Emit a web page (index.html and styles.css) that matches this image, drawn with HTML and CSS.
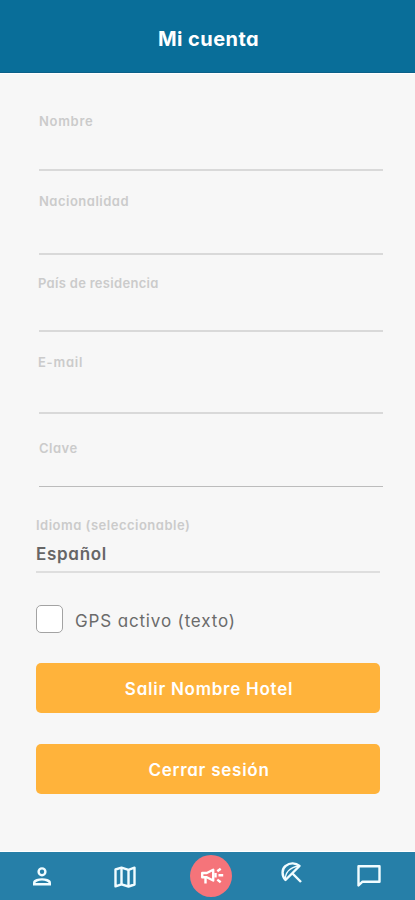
FILE: index.html
```
<!DOCTYPE html>
<html lang="es">
<head>
  <meta charset="UTF-8">
  <meta name="viewport" content="width=device-width, initial-scale=1">
  <title>Mi cuenta</title>
  <link rel="stylesheet" href="styles.css">
</head>

<body>
  <header class="topbar">
    <h1>Mi cuenta</h1>
  </header>

  <main class="account">
    <div class="fields">
      <div class="field nombre"><label>Nombre</label></div>
      <div class="field nacionalidad"><label>Nacionalidad</label></div>
      <div class="field pais"><label>País de residencia</label></div>
      <div class="field email"><label>E-mail</label></div>
      <div class="field clave"><label>Clave</label></div>
    </div>

    <div class="field idioma">
      <label>Idioma (seleccionable)</label>
      <span class="value">Español</span>
    </div>

    <div class="gps">
      <span class="checkbox"></span>
      <span class="gps-text">GPS activo (texto)</span>
    </div>

    <button type="button" class="btn salir">Salir Nombre Hotel</button>
    <button type="button" class="btn cerrar">Cerrar sesión</button>
  </main>

  <nav class="tabbar">
    <a class="tab user">
      <svg width="18" height="19" viewBox="0 0 18 19" fill="none" stroke="currentColor" stroke-width="2.4">
        <circle cx="9" cy="4.8" r="3.4"/>
        <path d="M1.2 17.3v-1.4c0-2.400 4.600-3.500 7.800-3.500s7.800 1.100 7.800 3.500v1.400z"/>
      </svg>
    </a>
    <a class="tab map">
      <svg width="22" height="22" viewBox="0 0 22 22" fill="none" stroke="currentColor" stroke-width="2.4" stroke-linejoin="round">
        <path d="M1.5 3.5L7.5 1.6l7 2.2 6-2.1v16.8l-6 2-7-2.2-6 2z"/>
        <path d="M7.5 1.6v16.7M14.5 3.8v16.7"/>
      </svg>
    </a>
    <a class="tab promo">
      <svg width="24" height="18" viewBox="0 0 24 18" fill="none" stroke="currentColor" stroke-width="2.400">
        <path d="M2.200 6h4.600l6.400-3.300v10.800L6.800 10.300H2.200z" stroke-linejoin="round"/>
        <path d="M5.500 10.500v6M15.500 6v4.400"/>
        <path d="M17.300 4.200l3.400-2.500M18.500 8.300h4.700M17.300 12.600l3.400 2.700"/>
      </svg>
    </a>
    <a class="tab beach">
      <svg width="22" height="22" viewBox="0 0 22 22" fill="none" stroke="currentColor" stroke-width="2.400" stroke-linejoin="round">
        <path d="M4.500 18C.5 13.500.6 7 4.800 3.800 9 .3 14.700.8 18.500 4z"/>
        <path d="M4.500 18C3.800 11.500 8 5 18.500 4" stroke-width="1.300"/>
        <path d="M11 11l9 9"/>
      </svg>
    </a>
    <a class="tab chat">
      <svg width="24" height="24" viewBox="0 0 24 24" fill="none" stroke="currentColor" stroke-width="2.400" stroke-linejoin="round">
        <path d="M1.500 2.200h21v15.500H5.500l-4 3.800z"/>
      </svg>
    </a>
  </nav>
</body>
</html>
```

FILE: styles.css
```
* {
  box-sizing: border-box;
}

body {
  margin: 0;
  height: 900px;
  display: flex;
  flex-direction: column;
  background: #f7f7f7;
  font-family: Inter, "Open Sans", sans-serif;
  font-feature-settings: "cv11";
  overflow: hidden;
}

.topbar {
  height: 73px;
  padding: 24px 0 0 2px;
  background: #096e99;
  border-bottom: 1px solid #0b6089;
  box-shadow: 0 1px 0 #fff;
  text-align: center;
}

h1 {
  margin: 0;
  color: #fff;
  font-size: 20px;
  line-height: 30px;
  font-weight: 700;
  letter-spacing: 0.45px;
}

.account {
  flex: 1;
  padding: 39px 35px 0 36px;
}

.fields {
  width: 344px;
  margin-left: 3px;
}

.field {
  border-bottom: 2px solid #d9d9d9;
}

.field label {
  display: block;
  color: #cbcbcb;
  font-size: 13px;
  line-height: 18px;
  font-weight: 600;
  letter-spacing: 0.5px;
}

.nombre {
  height: 59px;
}

.nombre label {
  letter-spacing: 0.7px;
}

.nacionalidad {
  height: 63px;
  margin-top: 21px;
}

.pais {
  height: 58px;
  margin-top: 19px;
}

.pais label {
  margin-left: -1px;
  letter-spacing: 0.3px;
}

.email {
  height: 61px;
  margin-top: 21px;
}

.email label {
  margin-left: -1px;
  letter-spacing: 0.75px;
}

.clave {
  height: 48px;
  margin-top: 25px;
  border-bottom: 1px solid #bcbcbc;
}

.idioma {
  height: 57px;
  margin-top: 29px;
  border-bottom-color: #dedede;
}

.value {
  display: block;
  margin-top: 7px;
  color: #666;
  font-size: 17px;
  line-height: 26px;
  font-weight: 600;
  letter-spacing: 0.7px;
}

.gps {
  display: flex;
  align-items: center;
  gap: 12px;
  height: 28px;
  margin-top: 32px;
}

.checkbox {
  width: 27px;
  height: 28px;
  background: #fff;
  border: 1px solid #a3a3a3;
  border-radius: 5px;
}

.gps-text {
  padding-top: 3px;
  color: #6b6b6b;
  font-size: 17px;
  line-height: 24px;
  letter-spacing: 0.85px;
}

.btn {
  display: block;
  width: 344px;
  height: 50px;
  margin-top: 30px;
  padding: 2px 0 0 2px;
  background: #ffb33b;
  border: none;
  border-radius: 5px;
  color: #fff;
  font: 600 17px/24px Inter, "Open Sans", sans-serif;
  font-feature-settings: "cv11";
  letter-spacing: 0.75px;
}

.cerrar {
  margin-top: 31px;
}

.tabbar {
  position: relative;
  display: grid;
  grid-template-columns: 84px 82px 90px 71px 83px;
  height: 48px;
  background: #267fa8;
  box-shadow: 0 -1px 0 #fff;
}

.tab {
  display: flex;
  align-items: center;
  justify-content: center;
  color: #f1fcff;
}

.map {
  padding-top: 2px;
}

.promo {
  width: 42px;
  height: 42px;
  margin: 3px auto 0;
  padding-left: 2px;
  background: #f5747a;
  border-radius: 50%;
  color: #fff;
}

.beach {
  padding-bottom: 6px;
}
```
